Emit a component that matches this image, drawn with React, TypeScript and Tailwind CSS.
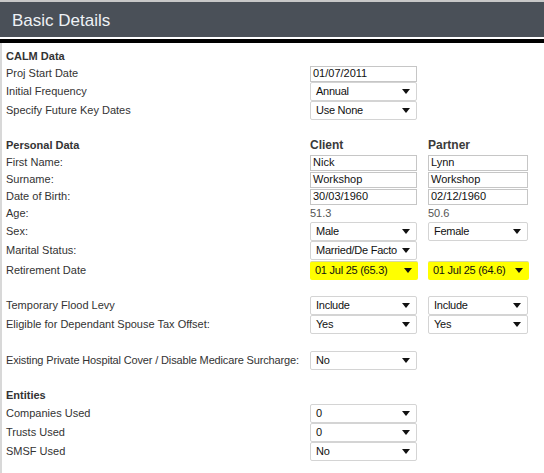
import type { ReactNode } from "react";

const font = { fontFamily: '"Liberation Sans", Arial, sans-serif' };

function Arrow() {
  return (
    <svg width="8" height="5" viewBox="0 0 8 5" className="shrink-0">
      <path d="M0 0H8L4 5Z" fill="#111" />
    </svg>
  );
}

function Select({ value, w = "w-[107px]", hl = false }: { value: string; w?: string; hl?: boolean }) {
  return (
    <div
      className={`${w} flex h-[19px] items-center justify-between rounded-[2px] pl-[5px] pr-[6px] text-[11px] text-[#111] ${
        hl ? "bg-[#ffff00] border-t border-t-[#d8d8a0]" : "border border-[#d4d4d4] bg-white"
      }`}
    >
      <span className="whitespace-nowrap tracking-[-0.25px]">{value}</span>
      <Arrow />
    </div>
  );
}

function Input({ value, w = "w-[107px]" }: { value: string; w?: string }) {
  return (
    <div className={`${w} flex h-[16px] items-center border border-[#c6c6c6] bg-white pl-[2px] text-[11px] text-[#111]`}>
      {value}
    </div>
  );
}

function Row({ label, h = "h-[19px]", bold = false, tight = false, children }: { label: string; h?: string; bold?: boolean; tight?: boolean; children?: ReactNode }) {
  return (
    <div className={`flex ${h} items-center`}>
      <div
        className={`w-[304px] shrink-0 whitespace-nowrap text-[11px] text-[#333] ${bold ? "font-bold text-[#3a3a3a]" : ""} ${
          tight ? "tracking-[-0.15px]" : ""
        }`}
      >
        {label}
      </div>
      <div className="flex items-center gap-[11px]">{children}</div>
    </div>
  );
}

export default function App() {
  return (
    <div className="h-[473px] w-[544px] overflow-hidden bg-white" style={font}>
      <div className="border-t-2 border-[#c8c8c8] bg-[#4a5058]">
        <div className="flex h-[35px] items-center pl-[12px] pt-[3px] text-[17px] text-[#eef2f6]">Basic Details</div>
      </div>
      <div className="h-[2px] bg-white" />
      <div className="h-[4px] bg-black" />
      <div className="border-l-2 border-[#d8d8d8] pl-[4px] pt-[5px]">
        <Row label="CALM Data" h="h-[17px]" bold />
        <Row label="Proj Start Date" h="h-[17px]">
          <Input value="01/07/2011" />
        </Row>
        <Row label="Initial Frequency">
          <Select value="Annual" />
        </Row>
        <Row label="Specify Future Key Dates">
          <Select value="Use None" />
        </Row>
        <div className="h-[16px]" />
        <Row label="Personal Data" h="h-[18px]" bold>
          <div className="w-[107px] text-[12px] font-bold text-[#3a3a3a]">Client</div>
          <div className="w-[100px] text-[12px] font-bold text-[#3a3a3a]">Partner</div>
        </Row>
        <Row label="First Name:" h="h-[17px]">
          <Input value="Nick" />
          <Input value="Lynn" w="w-[100px]" />
        </Row>
        <Row label="Surname:" h="h-[17px]">
          <Input value="Workshop" />
          <Input value="Workshop" w="w-[100px]" />
        </Row>
        <Row label="Date of Birth:" h="h-[17px]">
          <Input value="30/03/1960" />
          <Input value="02/12/1960" w="w-[100px]" />
        </Row>
        <Row label="Age:" h="h-[17px]">
          <div className="w-[107px] text-[11px] text-[#555]">51.3</div>
          <div className="w-[100px] text-[11px] text-[#555]">50.6</div>
        </Row>
        <Row label="Sex:">
          <Select value="Male" />
          <Select value="Female" w="w-[100px]" />
        </Row>
        <Row label="Marital Status:">
          <Select value="Married/De Facto" />
        </Row>
        <Row label="Retirement Date" h="h-[20px]">
          <Select value="01 Jul 25 (65.3)" w="w-[108px]" hl />
          <div className="-ml-[1px]">
            <Select value="01 Jul 25 (64.6)" w="w-[101px]" hl />
          </div>
        </Row>
        <div className="h-[16px]" />
        <Row label="Temporary Flood Levy">
          <Select value="Include" />
          <Select value="Include" w="w-[100px]" />
        </Row>
        <Row label="Eligible for Dependant Spouse Tax Offset:">
          <Select value="Yes" />
          <Select value="Yes" w="w-[100px]" />
        </Row>
        <div className="h-[17px]" />
        <Row label="Existing Private Hospital Cover / Disable Medicare Surcharge:" tight>
          <Select value="No" />
        </Row>
        <div className="h-[16px]" />
        <Row label="Entities" h="h-[18px]" bold />
        <Row label="Companies Used">
          <Select value="0" />
        </Row>
        <Row label="Trusts Used">
          <Select value="0" />
        </Row>
        <Row label="SMSF Used">
          <Select value="No" />
        </Row>
        <div className="h-[20px]" />
      </div>
    </div>
  );
}
